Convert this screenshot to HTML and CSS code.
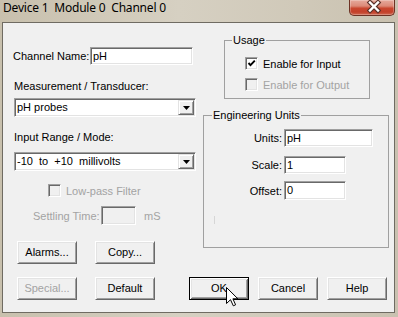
FILE: index.html
```html
<!DOCTYPE html>
<html>
<head>
<meta charset="utf-8">
<link rel="stylesheet" href="styles.css">
</head>
<body>
<div class="window">
  <div class="titlebar">
    <span class="title">Device 1  Module 0  Channel 0</span>
    <div class="close">
      <svg width="46" height="15" viewBox="0 0 46 15">
        <path d="M20 2.5 L28 10.5 M28 2.5 L20 10.5" stroke="#5a3028" stroke-width="4.6" stroke-linecap="square" fill="none"/>
        <path d="M20 2.5 L28 10.5 M28 2.5 L20 10.5" stroke="#ffffff" stroke-width="2.4" stroke-linecap="square" fill="none"/>
      </svg>
    </div>
  </div>
  <div class="client">
    <div class="top">
      <div class="left">
        <div class="name-row">
          <span class="name-lbl">Channel Name:</span>
          <div class="edit w-name">pH</div>
        </div>
        <div class="lbl meas-lbl">Measurement / Transducer:</div>
        <div class="combo combo1">
          <span class="combo-text">pH probes</span>
          <span class="drop"><svg width="7" height="4" viewBox="0 0 7 4"><path d="M0 0 H7 L3.5 4 Z" fill="#000"/></svg></span>
        </div>
        <div class="lbl range-lbl">Input Range / Mode:</div>
        <div class="combo combo2">
          <span class="combo-text">-10  to  +10  millivolts</span>
          <span class="drop"><svg width="7" height="4" viewBox="0 0 7 4"><path d="M0 0 H7 L3.5 4 Z" fill="#000"/></svg></span>
        </div>
        <div class="check-row lowpass">
          <span class="cb cb-disabled"></span>
          <span class="dis-text">Low-pass Filter</span>
        </div>
        <div class="settle-row">
          <span class="dis-text settle-lbl">Settling Time:</span>
          <div class="edit edit-disabled w-settle"></div>
          <span class="dis-text ms">mS</span>
        </div>
        <div class="btn-row row1">
          <button class="btn">Alarms...</button>
          <button class="btn gap18">Copy...</button>
        </div>
      </div>
      <div class="right">
        <fieldset class="group usage">
          <legend class="legend">Usage</legend>
          <div class="check-row in-row">
            <span class="cb"><svg width="9" height="9" viewBox="0 0 9 9"><path d="M1.5 4 L3.5 6.2 L7.8 1.6" stroke="#000" stroke-width="1.9" fill="none"/></svg></span>
            <span class="cb-text">Enable for Input</span>
          </div>
          <div class="check-row out-row">
            <span class="cb cb-disabled"></span>
            <span class="dis-text cb-text">Enable for Output</span>
          </div>
        </fieldset>
        <fieldset class="group eng">
          <legend class="legend eng-legend">Engineering Units</legend>
          <div class="eng-row units-row">
            <span class="eng-lbl">Units:</span>
            <div class="edit w-units">pH</div>
          </div>
          <div class="eng-row scale-row">
            <span class="eng-lbl">Scale:</span>
            <div class="edit w-scale">1</div>
          </div>
          <div class="eng-row offset-row">
            <span class="eng-lbl">Offset:</span>
            <div class="edit w-scale h19">0</div>
          </div>
          <div class="stray"></div>
        </fieldset>
      </div>
    </div>
    <div class="btn-row bottom">
      <button class="btn btn-disabled">Special...</button>
      <button class="btn gap18">Default</button>
      <button class="btn btn-default ok">OK</button>
      <button class="btn gap9">Cancel</button>
      <button class="btn gap9">Help</button>
    </div>
  </div>
  <svg class="cursor" width="13" height="20" viewBox="0 0 13 20">
    <path d="M0.5 0.5 L0.5 16.5 L4.5 12.7 L7.3 18.8 L9.6 17.8 L6.9 11.8 L11.9 11.8 Z" fill="#fff" stroke="#000" stroke-width="1" stroke-linejoin="miter"/>
  </svg>
</div>
</body>
</html>
```
FILE: styles.css
```css
* { box-sizing: border-box; }
html, body { margin: 0; padding: 0; }
body {
  width: 398px;
  height: 317px;
  overflow: hidden;
  font-family: "Liberation Sans", Arial, sans-serif;
  font-size: 11px;
  color: #000;
}
.window {
  position: relative;
  width: 398px;
  height: 317px;
  background: linear-gradient(to right, #c8c0ad 0%, #d6d0c2 45%, #d0c9b9 75%, #c9c1b0 100%);
  display: flex;
  flex-direction: column;
}
.titlebar {
  height: 22px;
  display: flex;
  justify-content: space-between;
  align-items: flex-start;
}
.title {
  font-family: "Noto Sans", "Open Sans", sans-serif;
  font-size: 12px;
  line-height: 14px;
  letter-spacing: -0.2px;
  white-space: pre;
  margin: 1px 0 0 3px;
  color: #000;
}
.close {
  width: 46px;
  height: 16px;
  margin-right: 3px;
  border: 1px solid #6d3224;
  border-top: none;
  border-radius: 0 0 5px 5px;
  background: linear-gradient(#e6aa9c 0%, #dc8a78 40%, #c9472f 55%, #c3402a 80%, #cf6a52 100%);
  box-shadow: inset 0 0 0 1px rgba(255,255,255,0.25);
}
.close svg { display: block; }
.client {
  margin-left: 2px;
  width: 393px;
  height: 291px;
  border: 1px solid #6f6b62;
  background: #f0f0f0;
  padding-left: 10px;
  display: flex;
  flex-direction: column;
}
.top {
  display: flex;
  align-items: flex-start;
  height: 241px;
}
.left {
  width: 183px;
  display: flex;
  flex-direction: column;
  align-items: flex-start;
}
.right {
  width: 186px;
  margin-left: 7px;
}
.lbl { line-height: 13px; margin-left: 1px; }
.name-row {
  margin-top: 24px;
  height: 18px;
  display: flex;
  align-items: center;
}
.name-lbl { width: 77px; line-height: 13px; }
.edit {
  background: #fff;
  border: 1px solid;
  border-color: #a0a0a0 #ffffff #ffffff #a0a0a0;
  box-shadow: inset 1px 1px #696969, inset -1px -1px #e3e3e3;
  height: 18px;
  line-height: 16px;
  padding-left: 2px;
  white-space: pre;
}
.edit-disabled { background: #f0f0f0; }
.w-name { width: 103px; }
.w-settle { width: 35px; height: 19px; }
.w-units { width: 89px; }
.w-scale { width: 62px; }
.h19 { height: 19px; }
.meas-lbl { margin-top: 15px; }
.combo {
  margin-left: 1px;
  width: 182px;
  height: 19px;
  background: #fff;
  border: 1px solid;
  border-color: #a0a0a0 #ffffff #ffffff #a0a0a0;
  box-shadow: inset 1px 1px #696969, inset -1px -1px #e3e3e3;
  display: flex;
  align-items: stretch;
  padding: 1px;
}
.combo1 { margin-top: 5px; }
.combo2 { margin-top: 8px; }
.combo-text {
  flex: 1;
  white-space: pre;
  line-height: 15px;
  padding-left: 1px;
}
.drop {
  width: 16px;
  background: #f0f0f0;
  border: 1px solid;
  border-color: #e3e3e3 #696969 #696969 #e3e3e3;
  box-shadow: inset 1px 1px #fff, inset -1px -1px #a0a0a0;
  display: flex;
  align-items: center;
  justify-content: center;
}
.drop svg { display: block; margin-top: 1px; }
.range-lbl { margin-top: 14px; }
.check-row {
  display: flex;
  align-items: center;
  height: 13px;
}
.cb {
  width: 13px;
  height: 13px;
  background: #fff;
  border: 1px solid;
  border-color: #a0a0a0 #ffffff #ffffff #a0a0a0;
  box-shadow: inset 1px 1px #696969, inset -1px -1px #e3e3e3;
  display: flex;
  align-items: center;
  justify-content: center;
  flex: none;
}
.cb svg { display: block; }
.cb-disabled { background: #f0f0f0; }
.dis-text { color: #a3a3a3; }
.lowpass { margin-top: 13px; margin-left: 35px; }
.lowpass .dis-text { margin-left: 5px; }
.settle-row {
  margin-top: 9px;
  margin-left: 20px;
  height: 19px;
  display: flex;
  align-items: center;
}
.settle-lbl { width: 68px; }
.ms { margin-left: 8px; }
.btn-row { display: flex; }
.row1 { margin-top: 16px; margin-left: 4px; }
.bottom { margin-top: 13px; margin-left: 4px; }
.btn {
  width: 60px;
  height: 23px;
  padding: 0;
  margin: 0;
  font-family: "Liberation Sans", Arial, sans-serif;
  font-size: 11px;
  color: #000;
  background: #f0f0f0;
  border: 1px solid;
  border-color: #ffffff #696969 #696969 #ffffff;
  box-shadow: inset 1px 1px #e3e3e3, inset -1px -1px #a0a0a0;
  line-height: 19px;
  text-align: center;
}
.btn-disabled { color: #a3a3a3; }
.btn-default {
  border-color: #000;
  box-shadow: inset 1px 1px #fff, inset -1px -1px #696969, inset 2px 2px #e3e3e3, inset -2px -2px #a0a0a0;
}
.gap18 { margin-left: 18px; }
.gap9 { margin-left: 9px; }
.ok { margin-left: 34px; }
.group {
  margin: 0;
  padding: 0;
  min-width: 0;
  border: 1px solid #a0a0a0;
}
.legend {
  margin-left: 7px;
  padding: 0 1px;
  line-height: 13px;
}
.eng-legend { margin-left: 8px; }
.usage {
  margin-top: 11px;
  margin-left: 21px;
  width: 146px;
  height: 65px;
}
.in-row { margin-top: 10px; margin-left: 20px; }
.out-row { margin-top: 8px; margin-left: 20px; }
.cb-text { margin-left: 5px; }
.eng {
  margin-top: 10px;
  width: 186px;
  height: 139px;
}
.eng-row { display: flex; align-items: center; }
.eng-lbl { width: 78px; margin-right: 2px; text-align: right; }
.units-row { margin-top: 7px; }
.scale-row { margin-top: 9px; }
.offset-row { margin-top: 7px; }
.stray {
  margin-top: 16px;
  margin-left: 10px;
  width: 1px;
  height: 8px;
  background: #d6d6d6;
}
.cursor {
  position: absolute;
  left: 226px;
  top: 287px;
}
```
